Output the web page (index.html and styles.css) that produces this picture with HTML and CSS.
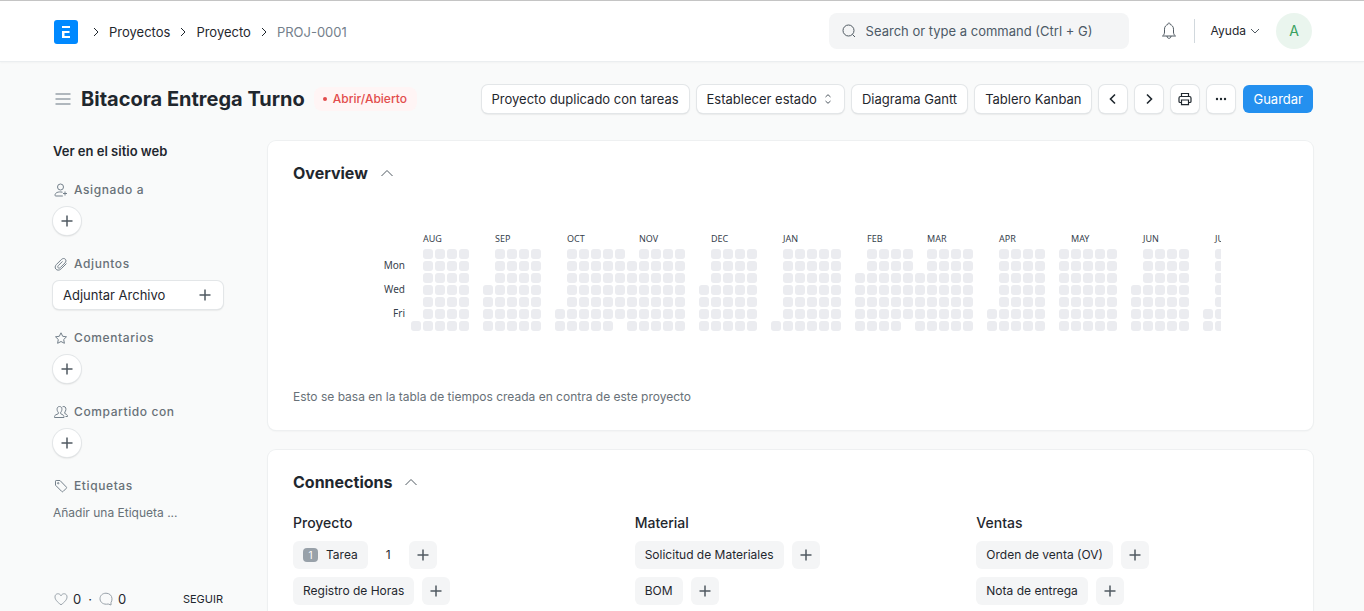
FILE: index.html
```html
<!DOCTYPE html>
<html lang="es">
<head>
<meta charset="utf-8">
<title>Bitacora Entrega Turno</title>
<link rel="stylesheet" href="styles.css">
</head>
<body>
<svg class="sprite" aria-hidden="true">
  <symbol id="chevron-right" viewBox="0 0 8 12"><path d="M2 2l4 4-4 4"/></symbol>
  <symbol id="chevron-up" viewBox="0 0 14 10"><path d="M1.500 8L7 2.500 12.500 8"/></symbol>
  <symbol id="plus" viewBox="0 0 12 12"><path d="M6 .5v11M.5 6h11"/></symbol>
</svg>

<header class="navbar">
  <nav class="crumbs" aria-label="Ruta">
    <a class="logo" href="#" aria-label="Inicio">
      <svg width="24" height="24" viewBox="0 0 24 24"><rect width="24" height="24" rx="3" fill="#0089ff"/><path d="M8 6h8v2H8zM8 11h7.500v2h-5v3H16v2H8z" fill="#fff"/></svg>
    </a>
    <svg class="sep" width="8" height="12"><use href="#chevron-right"/></svg>
    <a href="#">Proyectos</a>
    <svg class="sep" width="8" height="12"><use href="#chevron-right"/></svg>
    <a href="#">Proyecto</a>
    <svg class="sep" width="8" height="12"><use href="#chevron-right"/></svg>
    <a class="current" href="#">PROJ-0001</a>
  </nav>
  <label class="search">
    <svg class="icon" width="14" height="14" viewBox="0 0 14 14"><circle cx="6.500" cy="6.500" r="5.500"/><path d="M10.500 10.500l2.500 2.500"/></svg>
    <input type="text" placeholder="Search or type a command (Ctrl + G)" aria-label="Buscar">
  </label>
  <button class="plain bell" aria-label="Notificaciones">
    <svg class="icon" width="16" height="18" viewBox="0 0 16 18"><path d="M1.500 14h13c-1.300-1-2-2-2-4V7.200C12.500 4.600 10.900 3 9.200 2.500 9 1.200 8.600 1 8 1s-1 .2-1.200 1.500C5.100 3 3.500 4.600 3.500 7.200V10c0 2-.7 3-2 4zM6 14c0 1.500.8 2.300 2 2.300s2-.8 2-2.300"/></svg>
  </button>
  <button class="plain help">Ayuda
    <svg class="icon" width="10" height="8" viewBox="0 0 10 8"><path d="M1 2l4 4 4-4"/></svg>
  </button>
  <button class="plain avatar" aria-label="Usuario A">A</button>
</header>

<div class="page-head">
  <button class="plain menu" aria-label="Menú">
    <svg width="16" height="14" viewBox="0 0 16 14"><path d="M.5 2h15M.5 7h15M.5 12h15" stroke="#98a1a9" stroke-width="1.500"/></svg>
  </button>
  <h1>Bitacora Entrega Turno</h1>
  <span class="status">Abrir/Abierto</span>
  <div class="actions">
    <button class="btn">Proyecto duplicado con tareas</button>
    <button class="btn dropdown">Establecer estado
      <svg class="icon" width="6" height="10" viewBox="0 0 6 10"><path d="M.5 3L3 .7 5.500 3M.5 7L3 9.300 5.500 7"/></svg>
    </button>
    <button class="btn">Diagrama Gantt</button>
    <button class="btn">Tablero Kanban</button>
    <button class="btn square" aria-label="Anterior"><svg class="bold" width="8" height="12" viewBox="0 0 8 12"><path d="M6 1.500L1.500 6 6 10.500"/></svg></button>
    <button class="btn square" aria-label="Siguiente"><svg class="bold" width="8" height="12" viewBox="0 0 8 12"><path d="M2 1.500L6.500 6 2 10.500"/></svg></button>
    <button class="btn square" aria-label="Imprimir"><svg class="print" width="14" height="14" viewBox="0 0 14 14"><path d="M3.500 4.500v-3h7v3M3.500 10.500H2.200C1.300 10.500 1 10 1 9.500V6c0-1 .6-1.500 1.500-1.500h9c.9 0 1.500.5 1.500 1.500v3.500c0 .5-.3 1-1.200 1h-1.300M3.500 8h7v4.700h-7z"/></svg></button>
    <button class="btn square" aria-label="Más"><svg class="dots" width="12" height="4" viewBox="0 0 12 4"><circle cx="2" cy="2" r="1.200"/><circle cx="6" cy="2" r="1.200"/><circle cx="10" cy="2" r="1.200"/></svg></button>
    <button class="btn primary">Guardar</button>
  </div>
</div>

<div class="layout">
  <aside class="sidebar">
    <a class="site-link" href="#">Ver en el sitio web</a>
    <section>
      <h2><svg class="icon" width="14" height="14" viewBox="0 0 14 14"><circle cx="6.500" cy="4" r="3"/><path d="M8.500 9.200C4 8.300 1 9.800 1 12.200c0 .5.200.8.800.8h7M11 8.500v4M9 10.500h4"/></svg>Asignado a</h2>
      <button class="btn round" aria-label="Asignar"><svg class="plus" width="12" height="12"><use href="#plus"/></svg></button>
    </section>
    <section>
      <h2><svg class="icon" width="14" height="14" viewBox="0 0 14 14"><path d="M12.500 6.500l-5.300 5.300c-3.800 3.600-8.200-.8-4.800-4.300l5-5c2.800-2.700 6.400.6 3.500 3.500l-4.600 4.600c-1.600 1.500-3.500-.4-2-2l4.200-4.200"/></svg>Adjuntos</h2>
      <button class="btn attach">Adjuntar Archivo<svg class="plus" width="12" height="12"><use href="#plus"/></svg></button>
    </section>
    <section>
      <h2><svg class="icon" width="14" height="14" viewBox="0 0 14 14"><path d="M7 1.800l1.700 3.500 3.800.5-2.800 2.700.7 3.800L7 10.500l-3.400 1.800.7-3.800-2.800-2.700 3.800-.5z"/></svg>Comentarios</h2>
      <button class="btn round" aria-label="Comentar"><svg class="plus" width="12" height="12"><use href="#plus"/></svg></button>
    </section>
    <section>
      <h2><svg class="icon" width="14" height="14" viewBox="0 0 14 14"><path d="M5.500 1.500c-1.700 0-2.500 1.300-2.400 2.900.1 1.500.6 2.300 1.200 2.800v1.500L1.500 10c-.7.400-1 1-1 2.500h9.500c0-1.500-.2-2.100-1-2.500L6.700 8.700V7.200c.6-.5 1.100-1.300 1.200-2.800.1-1.600-.7-2.900-2.400-2.900zM8.500 1.800c2-1 3.700.5 3.400 2.700-.1 1.300-.5 2-1.100 2.500v1.500l1.800 1c.8.500.9 1.200.9 2h-2"/></svg>Compartido con</h2>
      <button class="btn round" aria-label="Compartir"><svg class="plus" width="12" height="12"><use href="#plus"/></svg></button>
    </section>
    <section>
      <h2><svg class="icon" width="14" height="14" viewBox="0 0 14 14"><path d="M1.500 2.200v4l6.200 6.200c.5.500 1 .5 1.500 0l3-3c.5-.5.500-1 0-1.500L6 1.500H2.200c-.5 0-.7.2-.7.7z"/><circle cx="4.200" cy="4.200" r=".7"/></svg>Etiquetas</h2>
      <a class="add-tag" href="#">Añadir una Etiqueta ...</a>
    </section>
    <div class="social">
      <button class="plain"><svg class="faint" width="14" height="14" viewBox="0 0 14 14"><path d="M7 12.800C3 9.800 1 7.500 1 4.900 1 1.300 5.500.6 7 3.800 8.500.6 13 1.300 13 4.900c0 2.600-2 4.900-6 7.900z"/></svg>0</button>
      <span class="dot">·</span>
      <button class="plain"><svg class="faint" width="14" height="14" viewBox="0 0 14 14"><path d="M12 10.500V13l-2.800-1C4.500 13 1 10.300 1 6.800 1 3.500 3.600 1.200 7 1.200s6 2.300 6 5.600c0 1.500-.3 2.700-1 3.700z"/></svg>0</button>
      <button class="plain follow">SEGUIR</button>
    </div>
  </aside>

  <main class="content">
    <section class="card">
      <h2>Overview <svg class="caret" width="14" height="10"><use href="#chevron-up"/></svg></h2>
      <div class="chart"><svg id="heatmap" class="heatmap" width="861" height="110" role="img" aria-label="Actividad por día"></svg></div>
      <p class="note">Esto se basa en la tabla de tiempos creada en contra de este proyecto</p>
    </section>
    <section class="card">
      <h2>Connections <svg class="caret" width="14" height="10"><use href="#chevron-up"/></svg></h2>
      <div class="links">
        <div class="group">
          <h3>Proyecto</h3>
          <div class="row"><a class="chip" href="#"><span class="badge">1</span>Tarea</a><span class="count">1</span><button class="chip add" aria-label="Nueva Tarea"><svg class="plus" width="12" height="12"><use href="#plus"/></svg></button></div>
          <div class="row"><a class="chip" href="#">Registro de Horas</a><button class="chip add" aria-label="Nuevo Registro de Horas"><svg class="plus" width="12" height="12"><use href="#plus"/></svg></button></div>
        </div>
        <div class="group">
          <h3>Material</h3>
          <div class="row"><a class="chip" href="#">Solicitud de Materiales</a><button class="chip add" aria-label="Nueva Solicitud de Materiales"><svg class="plus" width="12" height="12"><use href="#plus"/></svg></button></div>
          <div class="row"><a class="chip" href="#">BOM</a><button class="chip add" aria-label="Nuevo BOM"><svg class="plus" width="12" height="12"><use href="#plus"/></svg></button></div>
        </div>
        <div class="group">
          <h3>Ventas</h3>
          <div class="row"><a class="chip" href="#">Orden de venta (OV)</a><button class="chip add" aria-label="Nueva Orden de venta"><svg class="plus" width="12" height="12"><use href="#plus"/></svg></button></div>
          <div class="row"><a class="chip" href="#">Nota de entrega</a><button class="chip add" aria-label="Nueva Nota de entrega"><svg class="plus" width="12" height="12"><use href="#plus"/></svg></button></div>
        </div>
      </div>
    </section>
  </main>
</div>
<script src="heatmap.js"></script>
</body>
</html>
```
FILE: styles.css
```css
* { box-sizing: border-box; }

body {
  margin: 0;
  height: 100vh;
  overflow: hidden;
  background: #f9fafa;
  color: #1f272e;
  font: 13px/20px Inter, "Liberation Sans", sans-serif;
}

a { color: inherit; text-decoration: none; }
button, input { font: inherit; color: inherit; }
button { cursor: pointer; }
h1, h2, h3, p { margin: 0; }
svg { flex: none; display: block; fill: none; }
.sprite { width: 0; height: 0; position: absolute; }

.icon { stroke: #505a62; }
.plus { stroke: #505a62; stroke-width: 1.5; }
.bold { stroke: #1f272e; stroke-width: 1.6; }
.print { stroke: #1f272e; stroke-width: 1.2; }
.dots { fill: #1f272e; }
.faint { stroke: #98a1a9; }
.sep { stroke: #1f272e; }
.caret { stroke: #505a62; }
.plain { border: 0; padding: 0; background: none; display: flex; align-items: center; }

.navbar {
  height: 62px;
  padding: 0 52px 0 54px;
  display: flex;
  align-items: center;
  background: #fff;
  border-top: 1px solid #c4c4c4;
  border-bottom: 1px solid #ebeef0;
  box-shadow: 0 1px 2px rgba(0, 0, 0, 0.03);
}
.crumbs { padding-top: 1px; display: flex; align-items: center; gap: 9px; margin-right: auto; }
.logo { margin-right: 5px; }
.crumbs .current { color: #74808b; }
.search {
  width: 300px;
  height: 36px;
  padding: 0 13px;
  display: flex;
  align-items: center;
  gap: 10px;
  background: #f4f5f6;
  border-radius: 8px;
}
.search input { flex: 1; min-width: 0; border: 0; padding: 0; background: none; outline: 0; }
.search input::placeholder { color: #4c5a67; opacity: 1; }
.bell { margin: 0 17px 0 32px; }
.help {
  height: 24px;
  padding: 0 16px;
  gap: 4px;
  font-size: 12px;
  border-left: 1px solid #d1d8dd;
}
.avatar {
  width: 36px;
  height: 36px;
  justify-content: center;
  border-radius: 50%;
  background: #eaf5ee;
  color: #38a160;
  font-size: 14px;
}

.page-head {
  padding: 23px 51px 28px 55px;
  display: flex;
  align-items: center;
}
.page-head h1 { margin: 0 9px 0 10px; font-size: 20px; line-height: 28px; font-weight: 700; }
.status {
  padding: 2px 10px 2px 8px;
  display: flex;
  align-items: center;
  gap: 6px;
  border-radius: 8px;
  background: #fff5f5;
  color: #e24c4c;
  font-size: 12px;
  font-weight: 500;
}
.status::before { content: ""; width: 4px; height: 4px; margin-left: 1px; border-radius: 50%; background: #e24c4c; }
.actions { margin-left: auto; display: flex; gap: 8px; }
.btn {
  height: 28px;
  padding: 0 10px;
  display: flex;
  align-items: center;
  border: 0;
  border-radius: 6px;
  background: #fff;
  box-shadow: 0 0 0 1px #e3e6e8, 0 1px 2px rgba(0, 0, 0, 0.2);
  white-space: nowrap;
}
.dropdown { gap: 8px; padding-right: 13px; }
.square, .round { width: 28px; padding: 0; justify-content: center; }
.round { border-radius: 50%; }
.primary { background: #2490ef; color: #fff; box-shadow: none; }

.layout { padding: 0 51px 0 53px; display: flex; align-items: flex-start; gap: 45px; }
.sidebar { width: 170px; flex: none; }
.site-link { display: block; margin-bottom: 19px; font-size: 13px; font-weight: 600; }
.sidebar section { margin-bottom: 19px; }
.sidebar h2 {
  margin-bottom: 7px;
  padding-left: 1px;
  display: flex;
  align-items: center;
  gap: 6px;
  color: #687178;
  font-size: 12px;
  line-height: 20px;
  font-weight: 500;
  letter-spacing: 0.05em;
}
.sidebar .icon { stroke: #74808b; }
.attach { width: 100%; justify-content: space-between; padding-right: 12px; }
.add-tag { display: block; color: #687178; font-size: 12px; }
.social { margin-top: 66px; padding-left: 1px; display: flex; align-items: center; }
.social .plain { gap: 5px; }
.social .dot { margin: 0 7px; }
.social .follow { margin-left: auto; font-size: 11px; }

.content { flex: 1; min-width: 0; display: grid; gap: 20px; }
.card {
  padding: 20px 25px 23px;
  border-radius: 8px;
  background: #fff;
  box-shadow: 0 0 0 1px #eef0f1, 0 1px 2px rgba(0, 0, 0, 0.08);
}
.card h2 {
  display: flex;
  align-items: center;
  gap: 12px;
  font-size: 16px;
  line-height: 24px;
  font-weight: 700;
}
.chart { margin: 46px 0; display: flex; justify-content: center; }
.heatmap { overflow: hidden; fill: #ebecf0; }
.heatmap text { fill: #36414c; font: 9px "Noto Sans", sans-serif; }
.heatmap .day { font-size: 10px; text-anchor: end; }
.note { color: #687178; font-size: 12px; }

.links { margin-top: 19px; display: grid; grid-template-columns: repeat(3, 1fr); gap: 30px; }
.group { display: grid; gap: 8px; }
.group h3 { font-size: 14px; line-height: 20px; font-weight: 500; }
.row { display: flex; gap: 8px; }
.chip {
  height: 28px;
  padding: 0 10px;
  display: flex;
  align-items: center;
  border: 0;
  border-radius: 6px;
  background: #f4f5f6;
  font-size: 12px;
}
.add { width: 28px; padding: 0; justify-content: center; }
.badge {
  width: 15px;
  margin-right: 8px;
  border-radius: 4px;
  background: #98a1a9;
  color: #fff;
  font-size: 10px;
  line-height: 14px;
  text-align: center;
}
.count { width: 25px; font-size: 12px; line-height: 28px; text-align: center; }
```
FILE: heatmap.js
```js
// Each month: label, column of the label, and its weeks as [column, first row, last row].
const full = (from, count) => Array.from({ length: count }, (_, i) => [from + i, 0, 6]);
const months = [
  ["AUG", 1, [[0, 6, 6], ...full(1, 4)]],
  ["SEP", 7, [[6, 3, 6], ...full(7, 4)]],
  ["OCT", 13, [[12, 5, 6], ...full(13, 4), [17, 0, 5]]],
  ["NOV", 19, [[18, 1, 6], ...full(19, 4)]],
  ["DEC", 25, [[24, 3, 6], ...full(25, 4)]],
  ["JAN", 31, [[30, 6, 6], ...full(31, 5)]],
  ["FEB", 38, [[37, 2, 6], ...full(38, 3), [41, 0, 5]]],
  ["MAR", 43, [[42, 2, 6], ...full(43, 4)]],
  ["APR", 49, [[48, 5, 6], ...full(49, 4)]],
  ["MAY", 55, full(54, 5)],
  ["JUN", 61, [[60, 3, 6], ...full(61, 4)]],
  ["JUL", 67, [[66, 5, 6], ...full(67, 4)]],
];
const left = 51, top0 = 18, pitch = 12;
let out = "";
for (const [name, col, weeks] of months) {
  out += `<text x="${left + col * pitch}" y="11">${name}</text>`;
  for (const [c, first, last] of weeks) {
    for (let r = first; r <= last; r++) {
      out += `<rect x="${left + c * pitch}" y="${top0 + r * pitch}" width="10" height="10" rx="3"/>`;
    }
  }
}
["Mon", "Wed", "Fri"].forEach((day, i) => {
  out += `<text class="day" x="45" y="${top0 + 20 + i * 24}">${day}</text>`;
});
document.getElementById("heatmap").innerHTML = out;
```
